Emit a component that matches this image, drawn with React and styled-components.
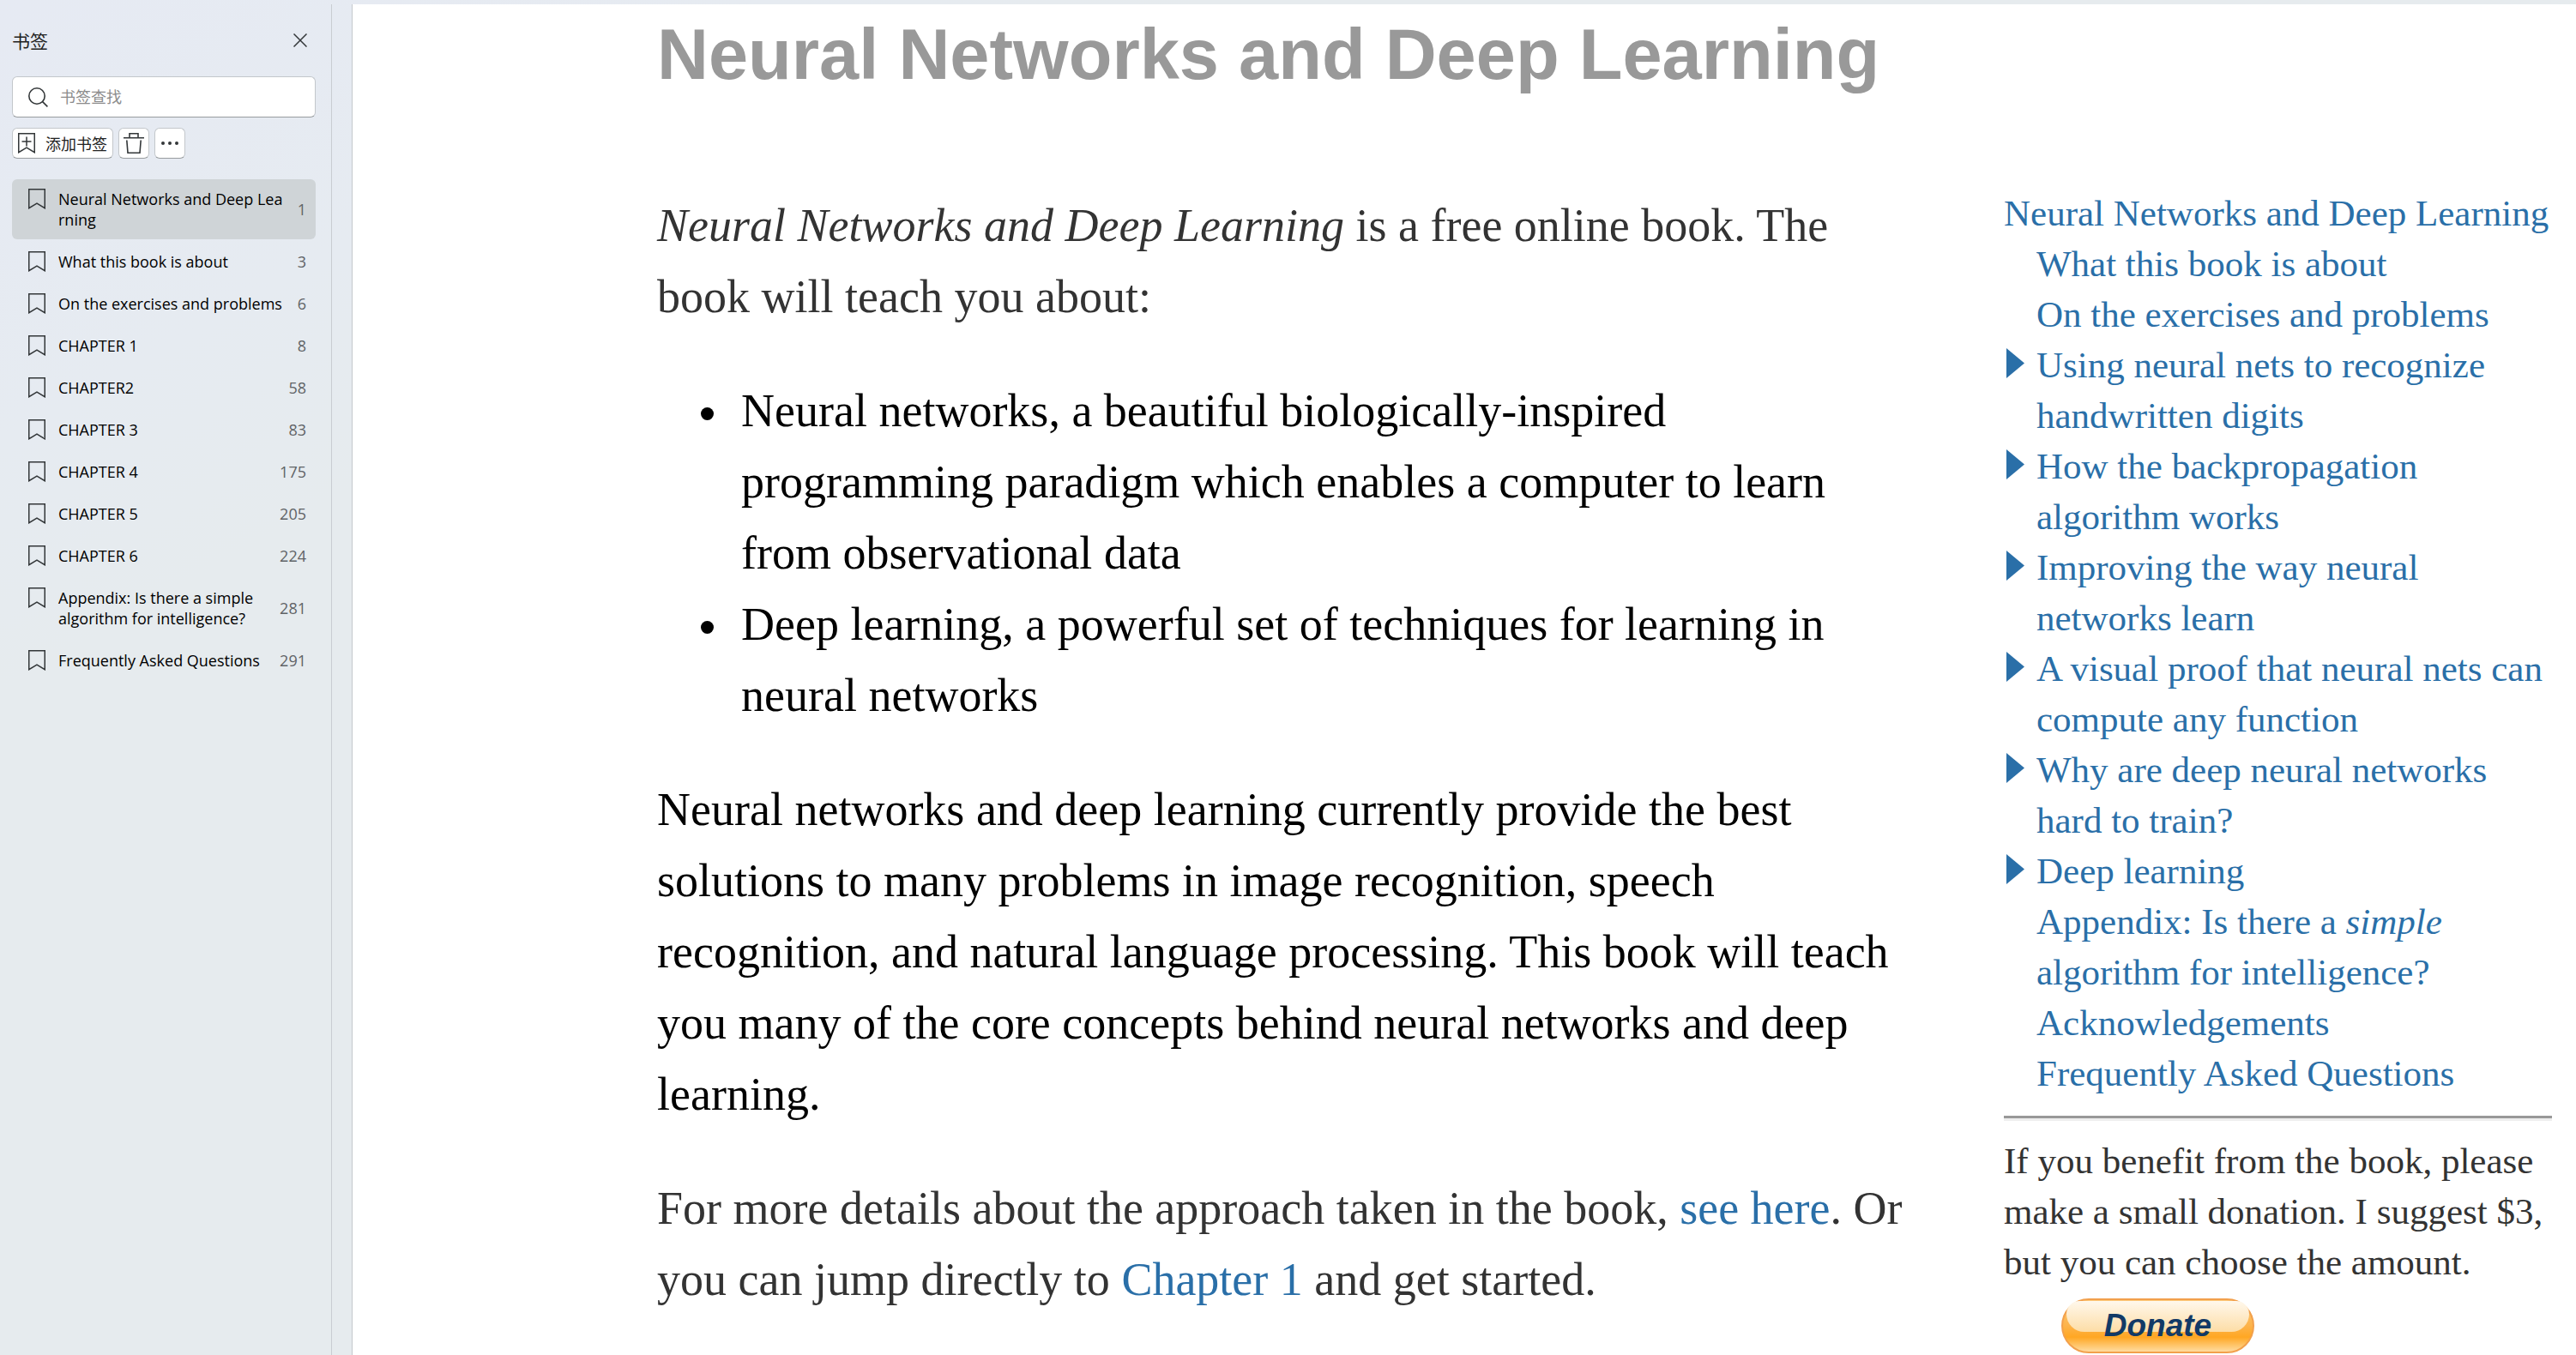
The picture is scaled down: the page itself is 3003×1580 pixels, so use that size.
import React from "react";
import styled, { createGlobalStyle, css } from "styled-components";

const serif = `Georgia, "Liberation Serif", serif`;
const ui = `"Segoe UI", "Open Sans", "Noto Sans CJK SC", sans-serif`;
const link = "#2a6fa8";

const GlobalStyle = createGlobalStyle`
  *, *::before, *::after { box-sizing: border-box; }
  body { margin: 0; background: #e6ebef; }
  button, input { font: inherit; color: inherit; margin: 0; padding: 0; }
`;

const Shell = styled.div`
  display: flex;
  min-height: 100vh;
  padding-top: 5px;
  background: linear-gradient(150deg, #e6eaf3 0, #e6ebf1 450px, #e6ebee 700px);
`;

const Sidebar = styled.aside`
  flex: none;
  width: 387px;
  padding: 24px 18px 0 14px;
  border-right: 1px solid #c9cdd2;
  font-family: ${ui};
  color: #222;
`;

const PanelHeader = styled.header`
  display: flex;
  align-items: center;
  justify-content: space-between;
  height: 36px;
  padding-right: 10px;
`;

const PanelTitle = styled.h2`
  margin: 0;
  font-size: 21px;
  font-weight: 400;
`;

const CloseButton = styled.button`
  display: flex;
  border: 0;
  background: none;
`;

const SearchBox = styled.label`
  display: flex;
  align-items: center;
  gap: 14px;
  height: 48px;
  margin-top: 24px;
  padding: 0 18px;
  border: 1px solid #c3c7cb;
  border-bottom-color: #989c9f;
  border-radius: 6px;
  background: #fff;
`;

const SearchInput = styled.input`
  flex: 1;
  min-width: 0;
  border: 0;
  outline: 0;
  background: none;
  font-size: 18px;
  &::placeholder { color: #8c8c8c; opacity: 1; }
`;

const Toolbar = styled.div`
  display: flex;
  gap: 6px;
  margin: 12px 0 24px;
`;

const ToolButton = styled.button`
  display: flex;
  align-items: center;
  justify-content: center;
  gap: 12px;
  min-width: 36px;
  height: 36px;
  padding: 0 ${(p) => (p.$wide ? 6 : 0)}px;
  border: 1px solid #c3c7cb;
  border-bottom-color: #989c9f;
  border-radius: 6px;
  background: #fff;
  font-size: 18px;
  white-space: nowrap;
`;

const BookmarkList = styled.ul`
  display: flex;
  flex-direction: column;
  gap: 3px;
  margin: 0;
  padding: 0;
  list-style: none;
`;

const BookmarkRow = styled.a`
  display: flex;
  align-items: center;
  padding: 11px 11px 11px 19px;
  border-radius: 6px;
  color: #000;
  font-size: 18px;
  line-height: 24px;
  text-decoration: none;
  white-space: nowrap;
  ${(p) => p.$active && css`background: #cfd4d7;`}
  svg { align-self: flex-start; flex: none; }
`;

const BookmarkLabel = styled.span`
  flex: 1;
  margin-left: 15px;
`;

const PageNumber = styled.span`
  color: #5f6366;
`;

const Page = styled.div`
  flex: 1;
  min-width: 0;
  margin-left: 23px;
  padding: 17px 28px 0 355px;
  border-left: 1px solid #c4c8cc;
  background: #fff;
  font-family: ${serif};
`;

const Title = styled.h1`
  margin: 0 0 113px;
  color: #999;
  font-family: Helvetica, "Liberation Sans", Arial, sans-serif;
  font-size: 83px;
  line-height: 84px;
  white-space: nowrap;
`;

const Columns = styled.div`
  display: flex;
  align-items: flex-start;
  gap: 106px;
`;

const Article = styled.main`
  display: flex;
  flex: 1;
  flex-direction: column;
  gap: 50px;
  min-width: 0;
  padding-top: 3px;
  color: #000;
  font-size: 54px;
  line-height: 83px;
`;

const Paragraph = styled.p`
  margin: 0;
  color: ${(p) => (p.$muted ? "#333" : "inherit")};
`;

const Topics = styled.ul`
  margin: 0;
  padding-left: 51px;
  list-style: none;
`;

const Topic = styled.li`
  display: flex;
  &::before {
    content: "";
    flex: none;
    width: 15px;
    height: 15px;
    margin: 37px 32px 0 0;
    border-radius: 50%;
    background: #000;
  }
`;

const TextLink = styled.a`
  color: ${link};
  text-decoration: none;
`;

const Contents = styled.aside`
  flex: none;
  width: 639px;
  color: #333;
  font-size: 43px;
  line-height: 59px;
`;

const ContentsList = styled.ul`
  margin: 0;
  padding: 0;
  list-style: none;
`;

const ContentsItem = styled.li`
  display: flex;
  white-space: nowrap;
`;

const Marker = styled.span`
  flex: none;
  width: 38px;
  padding: 10px 0 0 3px;
  line-height: 0;
`;

const Divider = styled.hr`
  margin: 20px 0 17px;
  border: 0;
  border-top: 3px solid #999;
  border-bottom: 3px solid #eee;
`;

const DonateButton = styled.button`
  position: relative;
  z-index: 0;
  display: block;
  width: 225px;
  height: 64px;
  margin: 13px 0 0 67px;
  border: 2px solid #f2a04c;
  border-radius: 32px;
  background: linear-gradient(#fdc878 0, #fdb34a 50%, #ffa723 72%, #ffdca0 100%);
  color: #123a66;
  font: italic 700 37px/56px "Liberation Sans", Arial, sans-serif;
  &::before {
    content: "";
    position: absolute;
    z-index: -1;
    inset: 1px 4px 23px;
    border-radius: 22px 22px 30px 30px;
    background: linear-gradient(#fff8ec, #fddda6);
  }
`;

function BookmarkIcon({ plus }) {
  return (
    <svg width="20" height="24" viewBox="0 0 20 24" fill="none" stroke="#333739" strokeWidth="1.5" aria-hidden="true">
      <path d="M.75.75h18.5v22L10 17.2.75 22.75Z" />
      {plus && <path d="M10 4.5v11M4.5 10h11" />}
    </svg>
  );
}

function SearchIcon() {
  return (
    <svg width="23" height="23" viewBox="0 0 23 23" fill="none" stroke="#333739" strokeWidth="1.6" aria-hidden="true">
      <circle cx="10" cy="10" r="9.2" />
      <path d="m16.4 16.4 6 6" />
    </svg>
  );
}

function TrashIcon() {
  return (
    <svg width="24" height="24" viewBox="0 0 24 24" fill="none" stroke="#333739" strokeWidth="1.6" aria-hidden="true">
      <path d="M0 5.8h24M7 5.8V.8h10v5M3.8 8.5 5 23.2h14l1.2-14.7" />
    </svg>
  );
}

function MoreIcon() {
  return (
    <svg width="20" height="4" viewBox="0 0 20 4" fill="#333739" aria-hidden="true">
      <circle cx="2" cy="2" r="2" />
      <circle cx="10" cy="2" r="2" />
      <circle cx="18" cy="2" r="2" />
    </svg>
  );
}

function CloseIcon() {
  return (
    <svg width="16" height="16" viewBox="0 0 16 16" stroke="#333739" strokeWidth="1.5" aria-hidden="true">
      <path d="m.5.5 15 15M15.5.5l-15 15" />
    </svg>
  );
}

function Triangle() {
  return (
    <svg width="21" height="35" viewBox="0 0 21 35" fill={link} aria-hidden="true">
      <path d="M0 0 21 17.5 0 35Z" />
    </svg>
  );
}

const bookmarks = [
  { lines: ["Neural Networks and Deep Lea", "rning"], page: 1, active: true },
  { lines: ["What this book is about"], page: 3 },
  { lines: ["On the exercises and problems"], page: 6 },
  { lines: ["CHAPTER 1"], page: 8 },
  { lines: ["CHAPTER2"], page: 58 },
  { lines: ["CHAPTER 3"], page: 83 },
  { lines: ["CHAPTER 4"], page: 175 },
  { lines: ["CHAPTER 5"], page: 205 },
  { lines: ["CHAPTER 6"], page: 224 },
  { lines: ["Appendix: Is there a simple", "algorithm for intelligence?"], page: 281 },
  { lines: ["Frequently Asked Questions"], page: 291 },
];

const contents = [
  { text: "What this book is about" },
  { text: "On the exercises and problems" },
  { text: <>Using neural nets to recognize<br />handwritten digits</>, folds: true },
  { text: <>How the backpropagation<br />algorithm works</>, folds: true },
  { text: <>Improving the way neural<br />networks learn</>, folds: true },
  { text: <>A visual proof that neural nets can<br />compute any function</>, folds: true },
  { text: <>Why are deep neural networks<br />hard to train?</>, folds: true },
  { text: "Deep learning", folds: true },
  { text: <>Appendix: Is there a <em>simple</em><br />algorithm for intelligence?</> },
  { text: "Acknowledgements" },
  { text: "Frequently Asked Questions" },
];

export default function App() {
  return (
    <>
      <GlobalStyle />
      <Shell>
        <Sidebar>
          <PanelHeader>
            <PanelTitle>书签</PanelTitle>
            <CloseButton type="button" aria-label="关闭"><CloseIcon /></CloseButton>
          </PanelHeader>
          <SearchBox>
            <SearchIcon />
            <SearchInput type="text" placeholder="书签查找" aria-label="书签查找" />
          </SearchBox>
          <Toolbar>
            <ToolButton type="button" $wide><BookmarkIcon plus />添加书签</ToolButton>
            <ToolButton type="button" aria-label="删除"><TrashIcon /></ToolButton>
            <ToolButton type="button" aria-label="更多"><MoreIcon /></ToolButton>
          </Toolbar>
          <BookmarkList>
            {bookmarks.map((b) => (
              <li key={b.page}>
                <BookmarkRow href="#" $active={b.active}>
                  <BookmarkIcon />
                  <BookmarkLabel>
                    {b.lines[0]}
                    {b.lines[1] && <><br />{b.lines[1]}</>}
                  </BookmarkLabel>
                  <PageNumber>{b.page}</PageNumber>
                </BookmarkRow>
              </li>
            ))}
          </BookmarkList>
        </Sidebar>
        <Page>
          <Title>Neural Networks and Deep Learning</Title>
          <Columns>
            <Article>
              <Paragraph $muted>
                <em>Neural Networks and Deep Learning</em> is a free online book. The
                book will teach you about:
              </Paragraph>
              <Topics>
                <Topic>
                  Neural networks, a beautiful biologically-inspired programming paradigm
                  which enables a computer to learn from observational data
                </Topic>
                <Topic>Deep learning, a powerful set of techniques for learning in neural networks</Topic>
              </Topics>
              <Paragraph>
                Neural networks and deep learning currently provide the best solutions to
                many problems in image recognition, speech recognition, and natural language
                processing. This book will teach you many of the core concepts behind neural
                networks and deep learning.
              </Paragraph>
              <Paragraph $muted>
                For more details about the approach taken in the book,{" "}
                <TextLink href="#">see here</TextLink>. Or you can jump directly to{" "}
                <TextLink href="#">Chapter 1</TextLink> and get started.
              </Paragraph>
            </Article>
            <Contents>
              <TextLink href="#">Neural Networks and Deep Learning</TextLink>
              <ContentsList>
                {contents.map((c, i) => (
                  <ContentsItem key={i}>
                    <Marker>{c.folds && <Triangle />}</Marker>
                    <TextLink href="#">{c.text}</TextLink>
                  </ContentsItem>
                ))}
              </ContentsList>
              <Divider />
              <Paragraph $muted>
                If you benefit from the book, please make a small donation. I suggest $3,
                but you can choose the amount.
              </Paragraph>
              <DonateButton type="button">Donate</DonateButton>
            </Contents>
          </Columns>
        </Page>
      </Shell>
    </>
  );
}
